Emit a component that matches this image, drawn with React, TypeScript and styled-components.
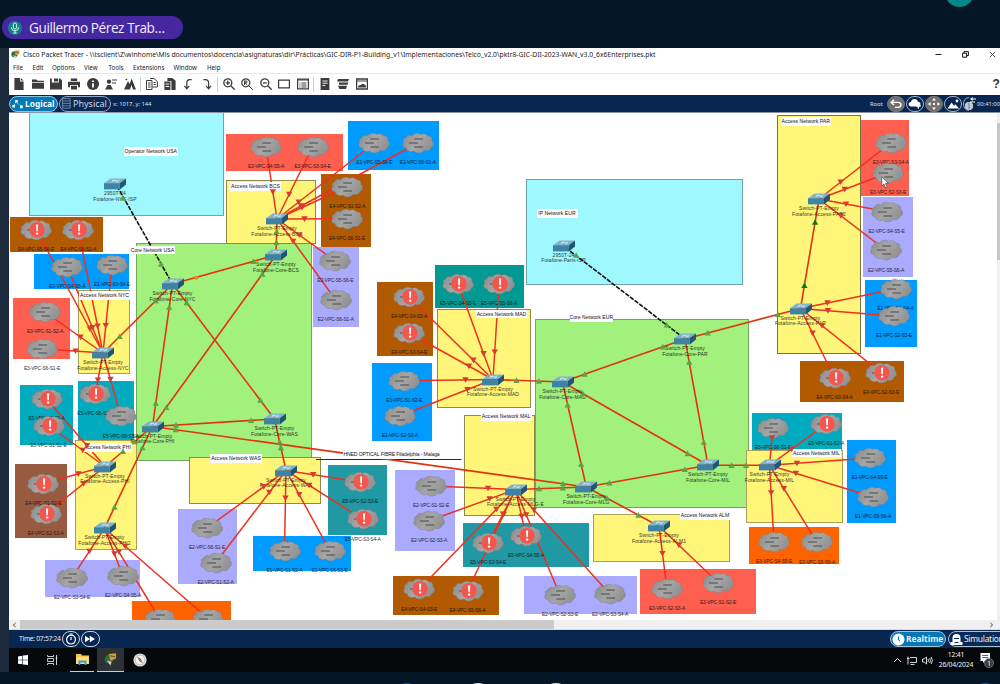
import React from "react";
import styled, { createGlobalStyle } from "styled-components";

const GlobalStyle = createGlobalStyle`
  * { box-sizing: border-box; }
  body { margin: 0; background: #051626; overflow: hidden; }
  #root { width: 1000px; height: 684px; overflow: hidden; }
  svg { display: block; }
`;

/* ---------- shell ---------- */

const Screen = styled.div`
  width: 1000px;
  height: 684px;
  display: flex;
  flex-direction: column;
  overflow: hidden;
  background: #051626;
  font-family: "Noto Sans", "Open Sans", sans-serif;
`;

const CallBar = styled.div`
  position: relative;
  flex: none;
  height: 48px;
  padding: 16px 0 0 2px;
`;

const SpeakerPill = styled.div`
  width: 181px;
  height: 23px;
  display: flex;
  align-items: center;
  gap: 7px;
  padding-left: 6px;
  border-radius: 12px;
  background: #4527a0;
  color: #f0edf9;
  font: 13.6px/24px "Open Sans", "Noto Sans", sans-serif;
  letter-spacing: -0.42px;
  white-space: nowrap;
`;

const MicBadge = styled.span`
  width: 14px;
  height: 14px;
  flex: none;
  border-radius: 50%;
  background: #12828a;
  display: flex;
  align-items: center;
  justify-content: center;
`;

const StatusDot = styled.div`
  position: absolute;
  left: 945px;
  top: -22px;
  width: 29px;
  height: 29px;
  border-radius: 50%;
  background: #06888a;
`;

const Desktop = styled.div`
  flex: none;
  height: 624px;
  padding-left: 9px;
  background: #1c2a3b;
  overflow: hidden;
`;

const AppWindow = styled.div`
  width: 991px;
  height: 600px;
  display: flex;
  flex-direction: column;
  background: #fff;
  overflow: hidden;
`;

const CallFooter = styled.div`
  flex: 1;
  position: relative;
  overflow: hidden;
`;

const CallButton = styled.div<{ $x: number; $c: string }>`
  position: absolute;
  left: ${(p) => p.$x - 14}px;
  top: 10.5px;
  width: 28px;
  height: 28px;
  border-radius: 50%;
  background: ${(p) => p.$c};
`;

/* ---------- window chrome ---------- */

const TitleBar = styled.div`
  flex: none;
  height: 13px;
  display: flex;
  align-items: center;
  padding-left: 2px;
  gap: 3px;
`;

const TitleText = styled.span`
  width: 633px;
  color: #1d1d1d;
  font: 6.8px/13px "Noto Sans", sans-serif;
  letter-spacing: -0.014px;
  white-space: nowrap;
`;

const WindowButtons = styled.div`
  margin-left: auto;
  width: 65px;
  display: flex;
  gap: 20px;
  align-items: center;
`;

const MenuBar = styled.div`
  flex: none;
  height: 13px;
  display: flex;
  border-bottom: 1px solid #e9e9e9;
  padding-left: 4px;
`;

const MenuItem = styled.span<{ $w: number }>`
  width: ${(p) => p.$w}px;
  flex: none;
  color: #1b1b1b;
  font: 6.2px/13px "Noto Sans", sans-serif;
  white-space: nowrap;
`;

const ToolBar = styled.div`
  flex: none;
  height: 21px;
  display: flex;
  align-items: center;
  padding: 0 0 1px 1px;
`;

const ToolButton = styled.span`
  width: 18.4px;
  flex: none;
  display: flex;
  justify-content: center;
`;

const Divider = styled.span`
  width: 1px;
  height: 15px;
  margin: 0 1.4px;
  background: #cfcfcf;
`;

const HelpMark = styled.span`
  margin-left: auto;
  width: 7.5px;
  color: #333;
  font: bold 12px/20px "Liberation Sans", sans-serif;
  white-space: nowrap;
`;

const ViewBar = styled.div`
  flex: none;
  height: 18px;
  display: flex;
  align-items: center;
  background: #08264f;
  border-bottom: 1.5px solid #8a93a0;
  color: #dfe6ee;
  font: 5.8px/16px "Noto Sans", sans-serif;
  overflow: hidden;
`;

const ViewTab = styled.span<{ $active?: boolean; $w: number }>`
  width: ${(p) => p.$w}px;
  height: 16px;
  flex: none;
  display: flex;
  align-items: center;
  gap: 2px;
  padding-left: 2px;
  margin-right: 1px;
  border: 1px solid ${(p) => (p.$active ? "#8cc4e6" : "#93a7c2")};
  border-radius: 8px;
  background: ${(p) => (p.$active ? "#0477b5" : "#0a2a55")};
  color: ${(p) => (p.$active ? "#f4f9fd" : "#c9d6e6")};
  font: ${(p) => (p.$active ? "bold 8.4px" : "9px")}/14px "Noto Sans", sans-serif;
  white-space: nowrap;
`;

const Coordinates = styled.span`
  margin-left: 1px;
`;

const NavActions = styled.div`
  margin-left: auto;
  width: 130px;
  display: flex;
  align-items: center;
  white-space: nowrap;
`;

const RootLabel = styled.span`
  width: 17px;
  flex: none;
`;

const NavButton = styled.span<{ $filled?: boolean }>`
  width: 18px;
  height: 16px;
  flex: none;
  margin-right: 1px;
  border-radius: 8px;
  border: 1px solid ${(p) => (p.$filled ? "#777" : "#9fb2cb")};
  background: ${(p) => (p.$filled ? "#707070" : "transparent")};
  display: flex;
  align-items: center;
  justify-content: center;
`;

/* ---------- workspace ---------- */

const WorkArea = styled.div`
  flex: none;
  height: 507px;
  display: flex;
  overflow: hidden;
`;

const Canvas = styled.div`
  position: relative;
  width: 988px;
  height: 507px;
  overflow: hidden;
  background: #fff;
`;

/* Scene coordinates start at the outer corner of the screen area. */
const Scene = styled.div`
  position: absolute;
  left: -9px;
  top: -113px;
  width: 1000px;
  height: 684px;
`;

const VScroll = styled.div`
  width: 3px;
  background: #f0f0f0;
  padding-top: 10px;
`;

const VThumb = styled.div`
  height: 137px;
  background: #c6c6c6;
`;

const HScroll = styled.div`
  flex: none;
  height: 10px;
  background: #f0f0f0;
  display: flex;
  align-items: center;
  justify-content: space-between;
  padding: 0 6px 0 3px;
  border-bottom: 1px solid #dcdcdc;
`;

const HThumb = styled.div`
  width: 534px;
  height: 9px;
  margin: 0 auto 0 3px;
  background: #cbcbcb;
`;

const Zone = styled.div<{ $box: number[]; $c: string; $edge?: string }>`
  position: absolute;
  left: ${(p) => p.$box[0]}px;
  top: ${(p) => p.$box[1]}px;
  width: ${(p) => p.$box[2] - p.$box[0]}px;
  height: ${(p) => p.$box[3] - p.$box[1]}px;
  background: ${(p) => p.$c};
  border: ${(p) => (p.$edge ? `1px solid ${p.$edge}` : "none")};
`;

const Caption = styled.div<{ $x: number; $y: number; $w: number; $tight?: boolean }>`
  position: absolute;
  left: ${(p) => p.$x}px;
  top: ${(p) => p.$y}px;
  width: ${(p) => p.$w}px;
  height: 8.5px;
  background: #fbfbff;
  color: #151515;
  text-align: center;
  font: 5.1px/8.5px "Liberation Sans", sans-serif;
  letter-spacing: ${(p) => (p.$tight ? "-0.13px" : "0.02px")};
  white-space: nowrap;
`;

const LinkLayer = styled.svg`
  position: absolute;
  left: 0;
  top: 0;
`;

const Device = styled.div<{ $x: number; $y: number; $w: number; $h: number }>`
  position: absolute;
  left: ${(p) => p.$x - p.$w / 2}px;
  top: ${(p) => p.$y - p.$h / 2}px;
  width: ${(p) => p.$w}px;
  height: ${(p) => p.$h}px;
`;

const NodeLabel = styled.div<{ $x: number; $y: number; $tight?: boolean }>`
  position: absolute;
  left: ${(p) => p.$x - 40}px;
  top: ${(p) => p.$y - 3}px;
  width: 80px;
  text-align: center;
  color: #101010;
  opacity: 0.85;
  font: 5px/6px "Liberation Sans", sans-serif;
  letter-spacing: ${(p) => (p.$tight ? "-0.18px" : "0.1px")};
  white-space: nowrap;
`;

const Pointer = styled.svg`
  position: absolute;
  left: 881px;
  top: 176px;
`;

/* ---------- bottom bars ---------- */

const TimeBar = styled.div`
  flex: none;
  height: 18px;
  display: flex;
  align-items: center;
  background: #08264f;
  padding-left: 10px;
  color: #e6edf5;
  font: 6.7px/18px "Noto Sans", sans-serif;
  white-space: nowrap;
  overflow: hidden;
`;

const RoundButton = styled.span`
  width: 18.5px;
  height: 16.5px;
  flex: none;
  margin-right: 1px;
  border: 1px solid #c6d3e2;
  border-radius: 9px;
  display: flex;
  align-items: center;
  justify-content: center;
`;

const TimeText = styled.span`
  width: 42.5px;
  flex: none;
  letter-spacing: -0.28px;
`;

const ModeTab = styled.span<{ $active?: boolean }>`
  flex: none;
  width: ${(p) => (p.$active ? 56 : 70)}px;
  height: 16.5px;
  display: flex;
  align-items: center;
  gap: 1px;
  padding-left: 1px;
  margin-right: 2px;
  border: 1px solid #a9bfd8;
  border-radius: 9px;
  background: ${(p) => (p.$active ? "#0477b5" : "#0a2a55")};
  font: ${(p) => (p.$active ? "bold 8.4px" : "8.4px")}/14px "Noto Sans", sans-serif;
  letter-spacing: ${(p) => (p.$active ? "0" : "-0.25px")};
`;

const ModeGroup = styled.div`
  margin-left: auto;
  width: 110px;
  display: flex;
  overflow: hidden;
`;

const TaskBar = styled.div`
  height: 24px;
  display: flex;
  align-items: stretch;
  background: #05090c;
  color: #f2f2f2;
`;

const TaskItem = styled.span<{ $w: number; $running?: boolean; $focus?: boolean }>`
  width: ${(p) => p.$w}px;
  flex: none;
  display: flex;
  align-items: center;
  justify-content: center;
  background: ${(p) => (p.$focus ? "#2e3236" : "transparent")};
  border-bottom: ${(p) => (p.$running ? "1px solid #f0c690" : "none")};
`;

const Tray = styled.div`
  margin-left: auto;
  width: 107px;
  display: flex;
  align-items: center;
  gap: 5px;
`;

const Clock = styled.div`
  width: 36px;
  margin-right: -1px;
  text-align: center;
  font: 6.8px/10.5px "Noto Sans", sans-serif;
  letter-spacing: -0.15px;
  white-space: nowrap;
`;

/* ---------- data ---------- */

const CYAN = "#a0f8ff";
const GREEN = "#a2f17d";
const YELLOW = "#fff679";
const BROWN = "#b25a02";
const RUST = "#985b40";
const BLUE = "#009bff";
const RED = "#ff5f4e";
const LILAC = "#aaaaff";
const ORANGE = "#ff6300";
const TEAL = "#00abc0";
const SEA = "#009a93";
const POOL = "#2099a5";

const zones: [string, number, number, number, number, string?][] = [
  [CYAN, 28.5, 112, 224, 216, "#6fa3a9"],
  [GREEN, 136, 243, 311.5, 461, "#71a75a"],
  [RED, 226, 134, 342.7, 170.6],
  [BLUE, 348.3, 121.3, 438.6, 170.3],
  [YELLOW, 226, 180, 316, 244, "#8f8a4c"],
  [BROWN, 320.5, 173.5, 370.7, 246.5],
  [LILAC, 312.5, 247, 359.3, 327],
  [BROWN, 10, 217, 103.3, 252],
  [BLUE, 33.5, 253.5, 128.6, 289],
  [RED, 13, 298, 70, 359],
  [YELLOW, 78, 289.5, 130, 374, "#a8a25c"],
  [TEAL, 77.5, 380.5, 134, 443],
  [TEAL, 20, 384.5, 73, 444.7],
  [YELLOW, 75, 440, 137, 549.6, "#a8a25c"],
  [RUST, 15, 463.5, 67, 538],
  [LILAC, 45, 560, 140, 596.7],
  [ORANGE, 132, 601, 230.7, 622],
  [YELLOW, 189, 457, 321.4, 504, "#8f8a4c"],
  [LILAC, 178, 509, 236.5, 584],
  [BLUE, 253, 536.3, 350.8, 571],
  [POOL, 328.3, 465, 387, 535.4],
  [LILAC, 395, 470, 455, 551],
  [SEA, 435, 265.3, 523.7, 308],
  [BROWN, 377.3, 281.5, 433, 356],
  [YELLOW, 437, 309, 531, 408.3, "#8f8a4c"],
  [BLUE, 372, 363, 432, 441],
  [YELLOW, 464, 415, 535, 516, "#8f8a4c"],
  [GREEN, 535, 319, 749, 508.3, "#71a75a"],
  [CYAN, 525.5, 179, 743, 285.3, "#6fa3a9"],
  [POOL, 463.3, 523, 589.5, 566.7],
  [BROWN, 393, 575.7, 498.7, 615.3],
  [LILAC, 524, 576.3, 637, 614],
  [YELLOW, 593, 514, 730, 562, "#a8a25c"],
  [RED, 639.5, 569, 756.4, 613.5],
  [YELLOW, 777, 115, 861, 353.5, "#77733c"],
  [RED, 861, 120, 909, 196],
  [LILAC, 863, 197, 913.3, 277],
  [BLUE, 865.3, 280, 916.6, 346.5],
  [BROWN, 800, 361, 904, 401.5],
  [TEAL, 751.6, 412.5, 842, 449.5],
  [YELLOW, 746, 450, 843, 523.4, "#a8a25c"],
  [BLUE, 846.6, 440, 896, 523.3],
  [ORANGE, 749.3, 527.3, 839, 564],
];

const captions: [string, number, number, number][] = [
  ["Operator Network USA", 124, 147, 53.5],
  ["Core Network USA", 130.5, 245.7, 44],
  ["Access Network BCS", 230, 182, 51],
  ["Access Network NYC", 79, 291, 51],
  ["Access Network PHI", 83, 443.2, 49],
  ["Access Network WAS", 210, 454, 52],
  ["Access Network MAD", 476, 309.7, 51],
  ["Core Network EUR", 569.5, 313, 43],
  ["Access Network MAL", 481, 412, 50.5],
  ["IP Network EUR", 536.5, 209.3, 41],
  ["Access Network PAR", 780.5, 117.3, 50.5],
  ["Access Network MIL", 792, 448.8, 49],
  ["Access Network ALM", 680, 511, 50],
];

const switches: Record<string, [number, number, string, string?]> = {
  ispUs: [115, 184, "Fotafone-NYC-ISP", "2950T-24"],
  aBcs: [277, 219, "Fotafone-Access-BCS"],
  cBcs: [276, 255, "Fotafone-Core-BCS"],
  cNyc: [172.5, 284, "Fotafone-Core-NYC"],
  aNyc: [103, 353, "Fotafone-Access-NYC"],
  cPhi: [152.5, 426.5, "Fotafone-Core-PHI"],
  aPhi: [105, 466.5, "Fotafone-Access-PHI"],
  aPhi2: [104.5, 528.3, "Fotafone-Access-PHI2"],
  cWas: [274.5, 419, "Fotafone-Core-WAS"],
  aWas: [286, 470.5, "Fotafone-Access-WAS"],
  aMad: [493, 379.5, "Fotafone-Access-MAD"],
  cMad: [562.5, 382, "Fotafone-Core-MAD"],
  ispEu: [563.5, 245.5, "Fotafone-Paris-ISP", "2950T-24"],
  cPar: [685, 339, "Fotafone-Core-PAR"],
  aPar2: [819, 199, "Fotafone-Access-PAR2"],
  aPar: [800.5, 308.5, "Fotafone-Access-PAR"],
  cMil: [708, 465.3, "Fotafone-Core-MIL"],
  aMil: [769.5, 465.3, "Fotafone-Access-MIL"],
  aMal: [515.5, 489.5, "Fotafone-Access-MLG-E"],
  cMlg: [586.3, 487, "Fotafone-Core-MLG"],
  aAlm: [659, 526.2, "Fotafone-Access-ALM1"],
};

/* name, x, y, attached switch, down */
const clouds: [string, number, number, string, boolean?][] = [
  ["E3-VPC-S4-S5-A", 266, 147, "aBcs"],
  ["E3-VPC-S3-S4-E", 312.5, 147, "aBcs"],
  ["E1-VPC-S5-S6-E", 374.3, 143, "aBcs"],
  ["E1-VPC-S6-S1-A", 417.8, 143, "aBcs"],
  ["E4-VPC-S1-S2-A", 347.3, 186.7, "aBcs"],
  ["E4-VPC-S6-S1-E", 347, 218.7, "aBcs"],
  ["E2-VPC-S5-S6-E", 335.3, 261, "aBcs"],
  ["E2-VPC-S6-S1-A", 335.8, 300, "aBcs"],
  ["E4-VPC-S5-S6-E", 36, 229.5, "aNyc", true],
  ["E4-VPC-S6-S1-A", 78.2, 229.5, "aNyc", true],
  ["E1-VPC-S4-S5-A", 67.3, 267, "aNyc"],
  ["E1-VPC-S3-S4-E", 112, 265, "aNyc"],
  ["E3-VPC-S1-S2-A", 45, 312, "aNyc"],
  ["E3-VPC-S6-S1-E", 42, 348.7, "aNyc"],
  ["E5-VPC-S2-S3-A", 46.5, 399, "aPhi", true],
  ["E5-VPC-S1-S2-E", 48.5, 425.5, "aPhi", true],
  ["E5-VPC-S5-S6-E", 95.3, 394, "aNyc", true],
  ["E5-VPC-S6-S1-A", 120.8, 416.3, "aNyc"],
  ["E4-VPC-S1-S2-E", 43.3, 483.5, "aPhi", true],
  ["E4-VPC-S2-S3-A", 45.7, 514, "aPhi", true],
  ["E2-VPC-S3-S4-E", 72, 577.7, "aPhi2"],
  ["E2-VPC-S4-S5-A", 123, 576, "aPhi2"],
  ["", 159.5, 618.5, "aPhi2"],
  ["", 208, 618.5, "aPhi2"],
  ["E2-VPC-S6-S1-E", 207, 528, "aWas"],
  ["E2-VPC-S1-S2-A", 215.7, 562.7, "aWas"],
  ["E1-VPC-S1-S2-A", 284.5, 550.5, "aWas"],
  ["E1-VPC-S6-S1-E", 329.7, 550.5, "aWas"],
  ["E5-VPC-S2-S3-E", 360.2, 482, "aWas", true],
  ["E5-VPC-S3-S4-A", 362.7, 519.3, "aWas", true],
  ["E2-VPC-S1-S2-E", 431, 486, "aMal"],
  ["E2-VPC-S2-S3-A", 429, 520.8, "aMal"],
  ["E5-VPC-S4-S5-E", 458, 283.5, "aMad", true],
  ["E5-VPC-S5-S6-A", 499, 283.5, "aMad", true],
  ["E4-VPC-S4-S5-A", 409.2, 297, "aMad", true],
  ["E4-VPC-S3-S4-E", 409.2, 333, "aMad", true],
  ["E1-VPC-S1-S2-E", 404.3, 380.7, "aMad"],
  ["E1-VPC-S2-S3-A", 400, 416, "aMad"],
  ["E5-VPC-S3-S4-E", 488.2, 543, "aMal", true],
  ["E5-VPC-S4-S5-A", 526, 535.5, "aMal", true],
  ["E4-VPC-S4-S5-E", 419.2, 589.3, "aMal", true],
  ["E4-VPC-S5-S6-A", 467.5, 591, "aMal", true],
  ["E2-VPC-S2-S3-E", 560, 595, "aMal"],
  ["E2-VPC-S3-S4-A", 610, 594.3, "aMal"],
  ["E3-VPC-S2-S3-A", 667, 589, "aAlm"],
  ["E3-VPC-S1-S2-E", 718, 582.5, "aAlm"],
  ["E3-VPC-S3-S4-A", 890.7, 143, "aPar2"],
  ["E3-VPC-S2-S3-E", 888, 173, "aPar2"],
  ["E2-VPC-S4-S5-E", 886.5, 211.5, "aPar2"],
  ["E2-VPC-S5-S6-A", 886, 250.3, "aPar2"],
  ["E1-VPC-S3-S4-A", 895.5, 289, "aPar"],
  ["E1-VPC-S2-S3-E", 894, 316, "aPar"],
  ["E4-VPC-S3-S4-A", 834.5, 378, "aPar", true],
  ["E4-VPC-S2-S3-E", 881, 372.7, "aPar", true],
  ["E5-VPC-S6-S1-E", 773, 427.5, "aMil"],
  ["E5-VPC-S1-S2-A", 826.2, 424, "aMil", true],
  ["E1-VPC-S4-S5-E", 869.7, 458, "aMil"],
  ["E1-VPC-S5-S6-A", 873, 497, "aMil"],
  ["E3-VPC-S4-S5-E", 774, 541.7, "aMil"],
  ["E3-VPC-S5-S6-A", 817, 542.3, "aMil"],
];

const trunks: [string, string][] = [
  ["cNyc", "cBcs"],
  ["cNyc", "cWas"],
  ["cNyc", "cPhi"],
  ["cNyc", "aNyc"],
  ["cBcs", "cPhi"],
  ["cBcs", "aBcs"],
  ["cPhi", "cWas"],
  ["cPhi", "cMlg"],
  ["cPhi", "aPhi"],
  ["cPhi", "aPhi2"],
  ["cWas", "aWas"],
  ["cMad", "aMad"],
  ["cMad", "cPar"],
  ["cMad", "cMil"],
  ["cMad", "cMlg"],
  ["cPar", "cMil"],
  ["cPar", "aPar"],
  ["aPar", "aPar2"],
  ["cMil", "aMil"],
  ["cMlg", "cMil"],
  ["cMlg", "aMal"],
  ["cMlg", "aAlm"],
];

const uplinks: [string, string][] = [
  ["ispUs", "cNyc"],
  ["ispEu", "cPar"],
];

type Pt = [number, number];

const along = (a: Pt, b: Pt, d: number): Pt => {
  const len = Math.hypot(b[0] - a[0], b[1] - a[1]);
  return [a[0] + ((b[0] - a[0]) * d) / len, a[1] + ((b[1] - a[1]) * d) / len];
};

const at = (key: string): Pt => [switches[key][0], switches[key][1]];

/* ---------- drawings ---------- */

const UpMark = ({ p, dark }: { p: Pt; dark?: boolean }) => (
  <path d={`M${p[0]} ${p[1] - 3}l3.1 5.6h-6.2z`} fill={dark ? "#0c7a14" : "#5da246"} />
);

const DownMark = ({ p }: { p: Pt }) => (
  <path d={`M${p[0]} ${p[1] + 3}l3.2 -5.6h-6.4z`} fill="#d63a32" />
);

const Links = () => (
  <LinkLayer width="1000" height="684" viewBox="0 0 1000 684">
    <path d="M316 459.5H461.5" stroke="#26263a" strokeWidth="1" />
    {uplinks.map(([a, b]) => {
      const p = at(a);
      const q = at(b);
      return (
        <line key={a} x1={p[0] + 2} y1={p[1] + 2} x2={q[0]} y2={q[1]} stroke="#111" strokeWidth="1.6" strokeDasharray="4.6 1.2" />
      );
    })}
    {trunks.map(([a, b]) => {
      const p = at(a);
      const q = at(b);
      return <line key={a + b} x1={p[0]} y1={p[1]} x2={q[0]} y2={q[1]} stroke="#e2330f" strokeWidth="1.6" />;
    })}
    {clouds.map(([n, x, y, s], i) => {
      const p = at(s);
      return <line key={n + i} x1={p[0]} y1={p[1]} x2={x} y2={y} stroke="#ee3020" strokeWidth="1.5" />;
    })}
  </LinkLayer>
);

const Marks = () => (
  <LinkLayer width="1000" height="684" viewBox="0 0 1000 684">
    {uplinks.map(([a, b]) => (
      <g key={a}>
        <UpMark p={along(at(a), at(b), 16)} />
        <UpMark p={along(at(b), at(a), 23)} />
      </g>
    ))}
    {trunks.map(([a, b]) => {
      const dark = b === "aPar2";
      const blocked = a === "cNyc" && b === "cBcs";
      const p = along(at(a), at(b), 23.5);
      return (
        <g key={a + b}>
          {blocked ? <circle cx={p[0] + 1} cy={p[1]} r="2" fill="#f5821f" /> : <UpMark p={p} dark={dark} />}
          <UpMark p={along(at(b), at(a), 23.5)} dark={dark} />
        </g>
      );
    })}
    {clouds.map(([n, x, y, s], i) => (
      <DownMark key={n + i} p={along(at(s), [x, y], 27.5)} />
    ))}
  </LinkLayer>
);

const CloudIcon = ({ down }: { down?: boolean }) => (
  <svg width="32" height="22" viewBox="0 0 32 22">
    <defs>
      <linearGradient id="cloudFill" x1="0" y1="0" x2="1" y2="0.4">
        <stop offset="0" stopColor="#8a8a8a" />
        <stop offset="0.55" stopColor="#a6a6a6" />
        <stop offset="1" stopColor="#929292" />
      </linearGradient>
    </defs>
    <path
      d="M3.6 6.2C4.2 3.6 7.6 2.6 9.6 3.9C11.2 1 16.5 .3 18.4 2.6C20.4 .8 25 1.6 25.8 4.2C28.8 3.6 30.4 6 29.8 8.4C32.6 10.4 31.9 14.6 28.9 15.4C28.4 18.4 24.6 19.4 22.2 18.2C20.2 21.6 13.8 21.8 12 19C8.6 20.8 4.4 18.8 4.2 15.8C.9 15.9 -.6 12.2 1.9 10.3C.4 8.6 1.4 6.4 3.6 6.2Z"
      fill="url(#cloudFill)"
      stroke="#7a7a7a"
      strokeWidth="0.6"
      strokeDasharray="1.4 .8"
    />
    <path d="M12.3 7h8.6M7 11h9M12.3 15h8.8" stroke="#686868" strokeWidth="1.7" />
    {down && (
      <>
        <circle cx="17" cy="10.8" r="7.7" fill="#f2564d" />
        <path d="M16 5.6h2.2l-.4 6.6h-1.4z" fill="#fff" />
        <circle cx="17.1" cy="14.6" r="1.2" fill="#fff" />
      </>
    )}
  </svg>
);

const SwitchIcon = () => (
  <svg width="22" height="12" viewBox="0 0 22 12">
    <path d="M0 5.2L6.6 0.6H22L15.8 5.2Z" fill="#7fb2c9" />
    <path d="M0 5.2H15.8V11.4H0Z" fill="#3f83a4" />
    <path d="M15.8 5.2L22 .6V6.4L15.8 11.4Z" fill="#1f5674" />
    <path d="M7.5 3.9l4-2.2M12 4l3.4-2.3M8 2.2l6.8 1.2" stroke="#dcecf4" strokeWidth=".7" />
  </svg>
);

const toolPaths: Record<string, React.ReactNode> = {
  file: <path d="M1.400 0h5.600v3.400h3.600V12H1.400z M7.800 0l2.800 2.600H7.800z" />,
  open: <path d="M0 1.500h4.500l1 1.200H12V4H0z M0 4.700h12v6H0z" />,
  save: <path fillRule="evenodd" d="M0 .5h1.800v4h7v-4h1.400L12 2.200v9.300H0z M4 .5h4v3H4z" />,
  print: <path fillRule="evenodd" d="M2.800.5h6.400v2.600H2.800z M0 3.800h12v5.400h-2V7H2v2.200H0z M3 7.800h6v3.700H3z" />,
  info: (
    <>
      <circle cx="6" cy="6" r="6" />
      <path d="M5.100 5.200h1.800v4.400H5.100z M5.100 2.400h1.800v1.700H5.100z" fill="#fff" />
    </>
  ),
  user: (
    <>
      <circle cx="4" cy="3.600" r="2.200" />
      <path d="M0 11.500L2.600 7h3L8 11.500z M7 1.500h5v1H7z M7 4.600h4v1H7z" />
    </>
  ),
  wizard: <path d="M0 11.500L4 3l1.600 3L7.600.4 12 11.500H9L7.500 7 6 11.500z M1 1.500l2 1 .4-2z" />,
  copy: (
    <g fill="none" stroke="#3c3c3c" strokeWidth="1">
      <path d="M.5 2.500H6v9H.5z M4 .5h4l3.400 3V9H6.500" />
      <path d="M2 5h2.600M2 7h2.600M2 9h2.600M7.600 4.500h2.200M7.600 6.500h2.200" />
    </g>
  ),
  paste: <path fillRule="evenodd" d="M3.400 0h5l3.200 2.800V12H7.400V3H3.400z M.4 3.600h6V12h-6z M1.600 5.400v1h3.600v-1z M1.600 8v1h3.600V8z" />,
  undo: <path d="M9.600 1.600H7.600Q4.800 1.600 4.800 4.800V10.600M2.400 7.800l2.400 3 2.400-3" fill="none" stroke="#3c3c3c" strokeWidth="1.200" />,
  redo: <path d="M2.400 1.600H4.400Q7.600 1.600 7.600 4.800V10.600M5.200 7.800l2.400 3 2.400-3" fill="none" stroke="#3c3c3c" strokeWidth="1.200" />,
  zoomIn: (
    <g fill="none" stroke="#3c3c3c" strokeWidth="1.300">
      <circle cx="4.800" cy="4.800" r="4" />
      <path d="M7.800 7.800l4 4M4.800 2.600V7M2.600 4.800H7" />
    </g>
  ),
  zoomFit: (
    <g fill="none" stroke="#3c3c3c" strokeWidth="1.200">
      <circle cx="4.800" cy="4.800" r="4" />
      <path d="M7.800 7.800l4 4M3.600 2.600V7M3.600 3h2.200v1.800H3.600L6.200 7" strokeWidth="1" />
    </g>
  ),
  zoomOut: (
    <g fill="none" stroke="#3c3c3c" strokeWidth="1.300">
      <circle cx="4.800" cy="4.800" r="4" />
      <path d="M7.800 7.800l4 4M2.800 4.800h4" />
    </g>
  ),
  panel: <path d="M.6 2.200h10.800v7.600H.6z" fill="none" stroke="#3c3c3c" strokeWidth="1.200" />,
  list: (
    <g fill="none" stroke="#3c3c3c">
      <path d="M.6 1.200h10.800v9.600H.6z" strokeWidth="1.200" />
      <path d="M.6 2h10.800M2.400 5h1M4.400 5h5M2.400 7h1M4.400 7h5M2.400 9h1M4.400 9h5" />
    </g>
  ),
  notes: (
    <>
      <path d="M1.600 0h8.800v12H1.600z" />
      <path d="M3.400 3h5.200M3.400 5.200h5.200M3.400 7.400h3" stroke="#fff" strokeWidth=".9" />
    </>
  ),
  stack: <path d="M1 1h11l-1 2.600H0z M2 4.600h9.400l-.8 2.200H2z M1 7.800h9l-1 3.200H2.400z" />,
  image: (
    <>
      <path d="M.6 1h10.800v10H.6z" fill="none" stroke="#3c3c3c" strokeWidth="1.300" />
      <path d="M1 2.400h10v1.200H1z M2 9.600Q2 6.600 5 7Q6.400 4.600 8.400 6.600Q10.400 7 10 9.600z" />
    </>
  ),
};

const ToolIcon = ({ name }: { name: string }) => (
  <svg width="12" height="12" viewBox="0 0 12 12" fill="#3c3c3c">
    {toolPaths[name]}
  </svg>
);

const toolGroups = [
  ["file", "open", "save", "print", "info", "user", "wizard"],
  ["copy", "paste", "undo", "redo"],
  ["zoomIn", "zoomFit", "zoomOut", "panel", "list"],
  ["notes", "stack", "image"],
];

const menu: [string, number][] = [
  ["File", 19.5],
  ["Edit", 19.5],
  ["Options", 32],
  ["View", 24.5],
  ["Tools", 24.5],
  ["Extensions", 40.5],
  ["Window", 33.5],
  ["Help", 20],
];

const PacketIcon = ({ size }: { size: number }) => (
  <svg width={size} height={size} viewBox="0 0 14 14">
    <circle cx="5.400" cy="6.600" r="4.800" fill="#2f6b3c" />
    <path d="M5 1l8-.6v5.600L7 8.400z" fill="#c9a23d" />
    <path d="M6 3l6 1" stroke="#7a4a1c" strokeWidth="1.200" />
    <path d="M3 8l4 5.400 1-4z" fill="#cfd8cf" />
  </svg>
);

const title =
  "Cisco Packet Tracer - \\\\tsclient\\Z\\winhome\\Mis documentos\\docencia\\asignaturas\\dir\\Prácticas\\GIC-DIR-P1-Building_v1\\Implementaciones\\Telco_v2.0\\pktr8-GIC-DII-2023-WAN_v3.0_6x6Enterprises.pkt";

const Topology = () => (
  <Scene>
    {zones.map(([c, x1, y1, x2, y2, edge], i) => (
      <Zone key={i} $box={[x1, y1, x2, y2]} $c={c} $edge={edge} />
    ))}
    <Links />
    {captions.map(([text, x, y, w]) => (
      <Caption key={text} $x={x} $y={y} $w={w}>
        {text}
      </Caption>
    ))}
    <Caption $x={343} $y={450} $w={97} $tight>
      HNED OPTICAL FIBRE Filadelphia - Malaga
    </Caption>
    {clouds.map(([name, x, y, , down], i) => (
      <React.Fragment key={i}>
        <NodeLabel $x={x} $y={y + 19.2} $tight>
          {name}
        </NodeLabel>
        <Device $x={x} $y={y} $w={32} $h={22}>
          <CloudIcon down={down} />
        </Device>
      </React.Fragment>
    ))}
    {Object.entries(switches).map(([key, [x, y, name, model]]) => (
      <React.Fragment key={key}>
        <NodeLabel $x={x} $y={y + 9}>
          {model ?? "Switch-PT-Empty"}
        </NodeLabel>
        <NodeLabel $x={x} $y={y + 14.8}>
          {name}
        </NodeLabel>
        <Device $x={x} $y={y} $w={22} $h={12}>
          <SwitchIcon />
        </Device>
      </React.Fragment>
    ))}
    <Marks />
    <Pointer width="9" height="13" viewBox="0 0 9 13">
      <path d="M.8.8V10l2.100-1.900L4.600 12l1.600-.7-1.700-3.700h2.900z" fill="#fff" stroke="#333" strokeWidth=".6" />
    </Pointer>
  </Scene>
);

export default function App() {
  return (
    <Screen>
      <GlobalStyle />
      <CallBar>
        <SpeakerPill>
          <MicBadge>
            <svg width="10" height="12" viewBox="0 0 10 12" fill="none" stroke="#d8f2f0" strokeWidth="1">
              <rect x="3.400" y="1" width="3.200" height="6" rx="1.600" />
              <path d="M1.400 5.400Q1.600 8.800 5 8.800T8.600 5.400M5 8.800V11M3.200 11h3.600" />
            </svg>
          </MicBadge>
          Guillermo Pérez Trab…
        </SpeakerPill>
        <StatusDot />
      </CallBar>
      <Desktop>
        <AppWindow>
          <TitleBar>
            <PacketIcon size={9} />
            <TitleText>{title}</TitleText>
            <WindowButtons>
              <svg width="7" height="7" viewBox="0 0 7 7" stroke="#222" fill="none">
                <path d="M.5 3.500h6" />
              </svg>
              <svg width="7" height="7" viewBox="0 0 7 7" stroke="#111" fill="none">
                <path d="M.6 2.200h4v4h-4z M2 2V.6h4.400v4H5" />
              </svg>
              <svg width="7" height="7" viewBox="0 0 7 7" stroke="#222" fill="none">
                <path d="M.8.8l5.400 5.400M6.200.8L.8 6.200" strokeWidth=".8" />
              </svg>
            </WindowButtons>
          </TitleBar>
          <MenuBar>
            {menu.map(([label, w]) => (
              <MenuItem key={label} $w={w}>
                {label}
              </MenuItem>
            ))}
          </MenuBar>
          <ToolBar>
            {toolGroups.map((group, i) => (
              <React.Fragment key={i}>
                {i > 0 && <Divider />}
                {group.map((name) => (
                  <ToolButton key={name}>
                    <ToolIcon name={name} />
                  </ToolButton>
                ))}
              </React.Fragment>
            ))}
            <HelpMark>?</HelpMark>
          </ToolBar>
          <ViewBar>
            <ViewTab $active $w={49}>
              <svg width="11" height="10" viewBox="0 0 11 10" fill="#fff">
                <path d="M.4 6h2.600v2.600H.4z M3.200 1h2.600v2.600H3.200z M8 6.400h2.800V9.200H8z" />
                <path d="M2 6l2-3 5 4" stroke="#fff" strokeWidth=".7" strokeDasharray="1.400 .8" fill="none" />
              </svg>
              Logical
            </ViewTab>
            <ViewTab $w={52}>
              <svg width="9" height="11" viewBox="0 0 9 11" fill="none" stroke="#7f98bb" strokeWidth=".8">
                <path d="M.6.6h7.600v9.600H.6z M.6 3h7.600M.6 5.400h7.600M.6 7.800h7.600" />
              </svg>
              Physical
            </ViewTab>
            <Coordinates>x: 1017, y: 144</Coordinates>
            <NavActions>
              <RootLabel>Root</RootLabel>
              <NavButton $filled>
                <svg width="12" height="10" viewBox="0 0 12 10" fill="none" stroke="#fff" strokeWidth="1.400">
                  <path d="M4 .8L1.200 3.400 4 6M1.400 3.400H8q3 0 3 2.400T8 8.400H5" />
                </svg>
              </NavButton>
              <NavButton>
                <svg width="14" height="11" viewBox="0 0 14 11" fill="#fff">
                  <path d="M3 8.400Q.2 8.200.6 5.800.9 4 3 4 3.400 1 6.400 1T9.800 3.800Q13 4 12.400 7L8 8.400z M9.600 5.600h1.400v1.700h1.700v1.400H11v1.700H9.600V8.700H8V7.300h1.600z" />
                </svg>
              </NavButton>
              <NavButton $filled>
                <svg width="12" height="12" viewBox="0 0 12 12" fill="#fff">
                  <path d="M6 0l1.900 2.600H4.100z M6 12l1.900-2.600H4.100z M0 6l2.600-1.900v3.800z M12 6L9.400 4.100v3.800z M5 5h2v2H5z" />
                </svg>
              </NavButton>
              <NavButton>
                <svg width="13" height="10" viewBox="0 0 13 10" fill="#fff">
                  <path d="M.6 9.400L4.600 3.400 7 6.800 8.400 5.200 12 9.400z" />
                  <circle cx="10" cy="2" r="1.400" />
                </svg>
              </NavButton>
              <svg width="14" height="14" viewBox="0 0 14 14" fill="#fff">
                <circle cx="6" cy="9" r="4" />
                <path d="M2 9h8M6 5v8M3 7h6M3 11h6" stroke="#08264f" strokeWidth=".5" />
                <path d="M8 1.500h5v1H8z M7 4.500h5v1H7z M9.600 0v4L7 2z" />
                <path d="M6 .6Q.6 1 .6 7T6 13.400" fill="none" stroke="#9fb2cb" />
              </svg>
              00:41:00
            </NavActions>
          </ViewBar>
          <WorkArea>
            <Canvas>
              <Topology />
            </Canvas>
            <VScroll>
              <VThumb />
            </VScroll>
          </WorkArea>
          <HScroll>
            <svg width="5" height="6" viewBox="0 0 5 6" fill="none" stroke="#444">
              <path d="M3.600 1L1.400 3l2.200 2" />
            </svg>
            <HThumb />
            <svg width="5" height="6" viewBox="0 0 5 6" fill="none" stroke="#444">
              <path d="M1.400 1l2.200 2-2.200 2" />
            </svg>
          </HScroll>
          <TimeBar>
            <TimeText>Time: 07:57:24</TimeText>
            <RoundButton>
              <svg width="12" height="12" viewBox="0 0 12 12" fill="none" stroke="#fff" strokeWidth="1.200">
                <circle cx="6" cy="6.600" r="4.400" />
                <path d="M6 4v3M4.600 1h3" />
              </svg>
            </RoundButton>
            <RoundButton>
              <svg width="10" height="8" viewBox="0 0 10 8" fill="#fff">
                <path d="M0 .8L5 4 0 7.200z M4.800 .8L10 4 4.800 7.200z" />
              </svg>
            </RoundButton>
            <ModeGroup>
              <ModeTab $active>
                <svg width="13" height="13" viewBox="0 0 13 13">
                  <circle cx="6.500" cy="6.500" r="6" fill="#fff" />
                  <path d="M6.500 3.500v3.500l1.500 1" fill="none" stroke="#0477b5" />
                </svg>
                Realtime
              </ModeTab>
              <ModeTab>
                <svg width="13" height="13" viewBox="0 0 13 13" fill="#fff">
                  <path d="M2.500 9V5Q2.500 1 6.500 1T10.500 5V9H12.500V12H.500V9z" />
                  <path d="M4 5.500h5M4.500 9.500h4" stroke="#0a2a55" />
                </svg>
                Simulation
              </ModeTab>
            </ModeGroup>
          </TimeBar>
        </AppWindow>
        <TaskBar>
          <TaskItem $w={28}>
            <svg width="10" height="10" viewBox="0 0 10 10" fill="#fff">
              <path d="M0 1.400l4.400-.7v4H0z M5 .6L10 0v4.700H5z M0 5.300h4.400v4L0 8.700z M5 5.300h5V10L5 9.400z" />
            </svg>
          </TaskItem>
          <TaskItem $w={30}>
            <svg width="11" height="10" viewBox="0 0 11 10" fill="none" stroke="#e8e8e8">
              <path d="M.6 0v1.500h6V0M.6 3.500h6v3h-6zM.6 10V8.500h6V10M9.500 0v10M8.500 3h2" strokeWidth=".9" />
            </svg>
          </TaskItem>
          <TaskItem $w={3} />
          <TaskItem $w={24} $running>
            <svg width="13" height="11" viewBox="0 0 13 11">
              <path d="M0 0h5l1 1.400h7V10H0z" fill="#f3c34c" />
              <path d="M0 3h13v7H0z" fill="#ffdc7a" />
              <path d="M2.500 11V6.500h8V11H8.600V8.600H4.400V11z" fill="#3f97d3" />
            </svg>
          </TaskItem>
          <TaskItem $w={3} />
          <TaskItem $w={27} $running $focus>
            <PacketIcon size={13} />
          </TaskItem>
          <TaskItem $w={32}>
            <svg width="14" height="14" viewBox="0 0 14 14">
              <circle cx="7" cy="7" r="6.600" fill="#d9d9d9" />
              <circle cx="7" cy="7" r="4.800" fill="#f3efec" stroke="#a9a9a9" strokeWidth=".6" />
              <path d="M4 3.600l6.200 7-4-2.600z" fill="#c9493a" />
              <path d="M4 3.600l6.200 7-2.400-4.800z" fill="#6b6f77" />
            </svg>
          </TaskItem>
          <Tray>
            <svg width="9" height="8" viewBox="0 0 9 8" fill="none" stroke="#eee">
              <path d="M1 6l3.500-3.500L8 6" />
            </svg>
            <svg width="10" height="9" viewBox="0 0 10 9" fill="none" stroke="#eee" strokeWidth=".9">
              <path d="M3 1.500h6.500v5H3M1 .5v8M0 2.500h2.500M3.500 8.500h4" />
            </svg>
            <svg width="11" height="9" viewBox="0 0 11 9" fill="none" stroke="#eee" strokeWidth=".9">
              <path d="M.5 3h1.700L4.500 1v7L2.200 6H.5zM6 3q1 1.500 0 3M7.600 2q1.800 2.500 0 5M9.200 1q2.400 3.500 0 7" />
            </svg>
            <Clock>
              12:41
              <br />
              26/04/2024
            </Clock>
            <svg width="16" height="16" viewBox="0 0 16 16">
              <path d="M2.500 1h9.500v8H7l-2 2V9H2.500z" fill="#fff" />
              <path d="M4.200 3.500h6M4.200 5.500h6" stroke="#333" strokeWidth=".8" />
              <circle cx="11" cy="11" r="4.600" fill="#3a3d40" stroke="#999" strokeWidth=".6" />
              <text x="9.200" y="13.500" fontSize="6.500" fill="#fff" fontFamily="Noto Sans, sans-serif">
                1
              </text>
            </svg>
          </Tray>
        </TaskBar>
      </Desktop>
      <CallFooter>
        <CallButton $x={407} $c="#16508a" />
        <CallButton $x={478} $c="#d7dde3" />
        <CallButton $x={556} $c="#d7dde3" />
        <CallButton $x={985} $c="#16508a" />
      </CallFooter>
    </Screen>
  );
}
